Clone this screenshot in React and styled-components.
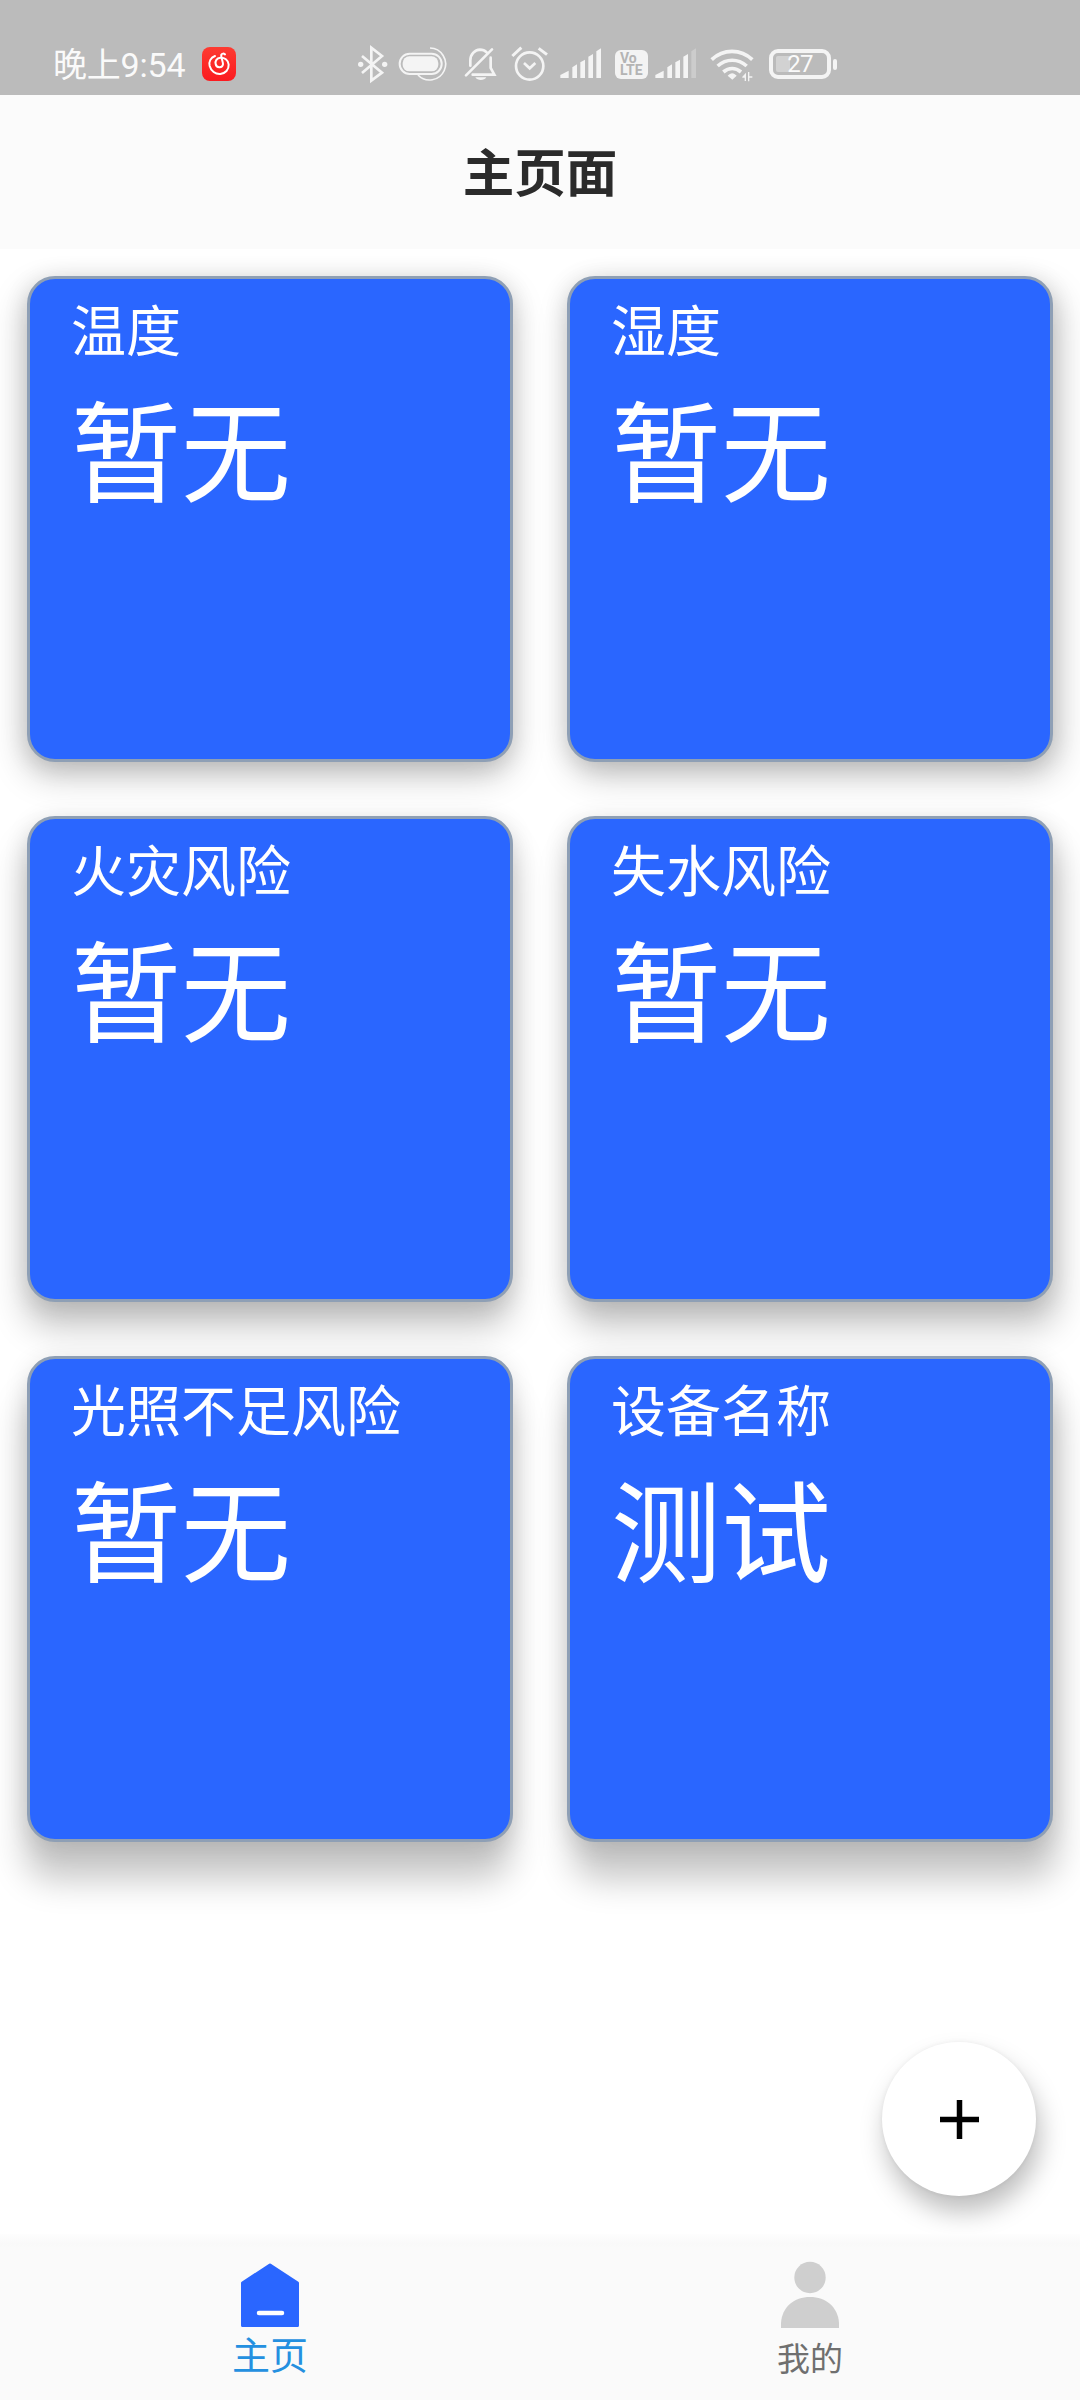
import React from "react";
import styled, { createGlobalStyle } from "styled-components";

const GlobalStyle = createGlobalStyle`
  * {
    box-sizing: border-box;
  }

  body {
    margin: 0;
    background-color: #ffffff;
    font-family: Roboto, "Noto Sans CJK SC", sans-serif;
  }
`;

const Screen = styled.div`
  display: flex;
  flex-direction: column;
  width: 1080px;
  height: 2400px;
  background-color: #ffffff;
  overflow: hidden;
`;

const StatusBar = styled.div`
  display: flex;
  align-items: center;
  flex: 0 0 95px;
  padding: 33px 0 0 53px;
  background-color: #bbbbbb;
  color: #fafafa;
`;

const Clock = styled.span`
  width: 149px;
  padding-top: 2px;
  font-size: 34px;
  font-weight: 400;
  line-height: 40px;
  letter-spacing: -0.2px;
  white-space: nowrap;
`;

const MusicBadge = styled.span`
  display: flex;
  width: 34px;
  height: 34px;
  border-radius: 8px;
  background: linear-gradient(#fd3b31, #fb1a1f);
`;

const StatusIcons = styled.div`
  display: flex;
  align-items: center;
  margin-left: 121px;
`;

const StatusIcon = styled.svg`
  display: block;
  width: ${(props) => props.$width}px;
  height: 40px;
  margin-right: ${(props) => props.$gap}px;
  fill: none;
  stroke: #f4f4f4;
`;

const VolteBox = styled.div`
  display: flex;
  flex-direction: column;
  width: 33px;
  height: 29px;
  margin-right: 7px;
  padding: 2px 0 0 5px;
  border-radius: 6px;
  background-color: #f3f3f3;
  color: #b4b4b4;
  font-size: 14px;
  font-weight: 700;
  line-height: 12px;
`;

const Battery = styled.div`
  display: flex;
  align-items: center;
  justify-content: center;
  width: 62px;
  height: 30px;
  border: 4px solid #f4f4f4;
  border-radius: 9px;
  background: linear-gradient(90deg, #d2d2d2 30%, #bbbbbb 30%) content-box;
  padding: 3px;
  font-size: 24px;
  letter-spacing: -0.8px;
  line-height: 24px;
`;

const BatteryTip = styled.span`
  width: 4px;
  height: 11px;
  margin-left: 2px;
  border-radius: 2px;
  background-color: #f4f4f4;
`;

const TitleBar = styled.header`
  display: flex;
  align-items: center;
  justify-content: center;
  flex: 0 0 154px;
  padding-top: 5px;
  background-color: #fbfbfb;
`;

const Title = styled.h1`
  margin: 0;
  color: #2b2b2b;
  font-size: 51.5px;
  font-weight: 700;
  line-height: 74px;
`;

const CardGrid = styled.main`
  display: grid;
  grid-template-columns: repeat(2, 486px);
  grid-auto-rows: 486px;
  gap: 54px;
  flex: 1 1 0;
  padding: 27px 27px 0;
`;

const CardBox = styled.section`
  padding: 13px 0 0 41px;
  border: 3px solid #8e9fb5;
  border-radius: 28px;
  background-color: #2a66ff;
  box-shadow: 0 4px 24px rgba(0, 0, 0, 0.12),
    ${(props) => props.$shiftX}px ${(props) => props.$shiftY}px 34px
      rgba(0, 0, 0, 0.22);
  color: #ffffff;
`;

const CardLabel = styled.div`
  font-size: 55px;
  line-height: 80px;
`;

const CardValue = styled.div`
  margin-top: 5px;
  font-size: 110px;
  line-height: 159px;
`;

const AddButton = styled.button`
  display: flex;
  align-items: center;
  justify-content: center;
  align-self: flex-end;
  flex: 0 0 154px;
  width: 154px;
  margin: 0 44px 38px 0;
  padding: 0;
  border: 0;
  border-radius: 50%;
  background-color: #ffffff;
  box-shadow: 0 0 5px rgba(0, 0, 0, 0.06), 4px 16px 26px rgba(0, 0, 0, 0.26);
`;

const PlusIcon = styled.svg`
  width: 39px;
  height: 39px;
  stroke: #000000;
  stroke-width: 5.5;
`;

const TabBar = styled.nav`
  display: grid;
  grid-template-columns: 1fr 1fr;
  flex: 0 0 166px;
  background: linear-gradient(#fefefe, #f9f9f9 10px, #fafafa 14px);
`;

const Tab = styled.div`
  display: flex;
  flex-direction: column;
  align-items: center;
  padding-top: 27px;
  color: ${(props) => (props.$active ? "#2490e0" : "#6f6f6f")};
  font-size: ${(props) => (props.$active ? 38 : 33)}px;
  font-weight: 400;
  line-height: 54px;
`;

const TabIcon = styled.svg`
  display: block;
  width: 60px;
  height: 70px;
  margin-bottom: ${(props) => props.$space}px;
`;

const cards = [
  { label: "温度", value: "暂无" },
  { label: "湿度", value: "暂无" },
  { label: "火灾风险", value: "暂无" },
  { label: "失水风险", value: "暂无" },
  { label: "光照不足风险", value: "暂无" },
  { label: "设备名称", value: "测试" },
];

const Signal = ({ weak, gap }) => (
  <StatusIcon viewBox="660 42 123 120" $width={41} $gap={gap}>
    <g fill="#f4f4f4" stroke="none">
      <path d="M661 144v-9l25-13v22z" />
      <path d="M697 144v-32l14-9v41z" />
      <path d="M721 144v-47l14-8v55z" />
      <path d="M745 144v-64l14-8v72z" />
      <path d="M769 144v-80l14-9v89z" opacity={weak ? 0.3 : 1} />
    </g>
  </StatusIcon>
);

const StatusRow = () => (
  <StatusBar>
    <Clock>晚上9:54</Clock>
    <MusicBadge>
      <svg
        width="34"
        height="34"
        viewBox="606 81 102 102"
        fill="none"
        stroke="#fff"
        strokeWidth="6"
        strokeLinecap="round"
      >
        <path d="M645 108c-13 5-19 17-16 30 4 15 17 25 32 24 15-2 26-13 25-28-1-14-13-22-25-21-11 1-16 10-14 19 2 12 20 13 22 1 1-6-7-22-5-29 2-4 7-4 11-1" />
      </svg>
    </MusicBadge>
    <StatusIcons>
      <StatusIcon viewBox="52 42 93 120" $width={31} $gap={10}>
        <path d="M67 78l60 50-32 24V53l32 25-60 51" strokeWidth="8" />
        <circle cx="63" cy="103" r="8" fill="#f4f4f4" stroke="none" />
        <circle cx="135" cy="103" r="8" fill="#f4f4f4" stroke="none" />
      </StatusIcon>
      <StatusIcon viewBox="175 42 150 120" $width={50} $gap={15}>
        <rect x="180" y="71" width="126" height="61" rx="30" strokeWidth="6" />
        <rect
          x="189"
          y="79"
          width="107"
          height="45"
          rx="20"
          fill="#f4f4f4"
          stroke="none"
        />
        <path d="M271 54a48 48 0 1 1-36 81" strokeWidth="5" />
      </StatusIcon>
      <StatusIcon viewBox="370 42 102 120" $width={34} $gap={14}>
        <path
          d="M379 136l78-78M392 107V91c0-18 13-31 29-32 9 0 15 3 20 8M453 83v31l11 20h-65"
          strokeWidth="8"
          strokeLinecap="round"
        />
        <path d="M407 142h33c-6 11-27 11-33 0z" fill="#f4f4f4" stroke="none" />
      </StatusIcon>
      <StatusIcon viewBox="514 42 111 120" $width={37} $gap={12}>
        <circle cx="570" cy="108" r="41" strokeWidth="8" />
        <path d="M553 99l17 16 17-16" strokeWidth="8" />
        <path d="M518 78l27-25M622 74l-25-19" strokeWidth="9" />
      </StatusIcon>
      <Signal gap={14} />
      <VolteBox>
        <span>Vo</span>
        <span>LTE</span>
      </VolteBox>
      <Signal weak gap={14} />
      <StatusIcon viewBox="360 42 132 120" $width={44} $gap={15}>
        <path
          d="M365 89c35-33 87-33 122 0M383 108c26-23 61-23 87 0M400 126c16-14 37-14 53 0"
          strokeWidth="11"
        />
        <path
          d="M413 137c9-10 18-10 27 0l-13 12zM457 140l11-12v25h-4v-10h-7zM474 126v28h4v-11h9v-4h-9v-13z"
          fill="#f4f4f4"
          stroke="none"
        />
      </StatusIcon>
      <Battery>27</Battery>
      <BatteryTip />
    </StatusIcons>
  </StatusBar>
);

const App = () => (
  <>
    <GlobalStyle />
    <Screen>
      <StatusRow />
      <TitleBar>
        <Title>主页面</Title>
      </TitleBar>
      <CardGrid>
        {cards.map((card, index) => (
          <CardBox
            key={card.label}
            $shiftX={index % 2 ? 5 : -2}
            $shiftY={14 + Math.floor(index / 2) * 12}
          >
            <CardLabel>{card.label}</CardLabel>
            <CardValue>{card.value}</CardValue>
          </CardBox>
        ))}
      </CardGrid>
      <AddButton aria-label="添加">
        <PlusIcon viewBox="0 0 39 39">
          <path d="M19.5 0v39M0 19.5h39" />
        </PlusIcon>
      </AddButton>
      <TabBar>
        <Tab $active>
          <TabIcon viewBox="0 0 60 70" $space={-2}>
            <path
              d="M30 4L57.500 22V64.500H2.500V22z"
              fill="#2a66ff"
              stroke="#2a66ff"
              strokeWidth="3"
              strokeLinejoin="round"
            />
            <path
              d="M19 52h23"
              stroke="#fff"
              strokeWidth="4.500"
              strokeLinecap="round"
            />
          </TabIcon>
          主页
        </Tab>
        <Tab>
          <TabIcon viewBox="0 0 60 70" $space={2}>
            <circle cx="30" cy="16.500" r="15.700" fill="#cfcfcf" />
            <path d="M1 67v-5C2 46 14 36 30 36s28 10 29 26v5z" fill="#cfcfcf" />
          </TabIcon>
          我的
        </Tab>
      </TabBar>
    </Screen>
  </>
);

export default App;
